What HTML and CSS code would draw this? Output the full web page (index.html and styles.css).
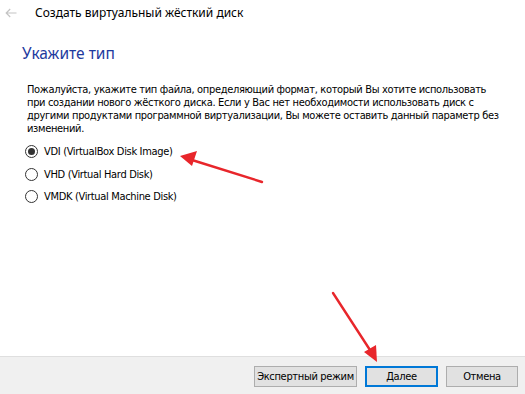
FILE: index.html
```html
<!DOCTYPE html>
<html lang="ru">
<head>
  <meta charset="UTF-8" />
  <title>Создать виртуальный жёсткий диск</title>
  <link rel="stylesheet" href="styles.css">
</head>
<body>
  <div class="wizard">
    <div class="titlebar">
      <svg class="back" width="12" height="10" viewBox="0 0 12 10">
        <path d="M11.5 5H1.2M5.2 1L1.2 5l4 4" fill="none" stroke="#c4c4c4" stroke-width="1.2"/>
      </svg>
      <span class="title">Создать виртуальный жёсткий диск</span>
    </div>

    <div class="content">
      <h2>Укажите тип</h2>
      <p class="descr">Пожалуйста, укажите тип файла, определяющий формат, который Вы хотите использовать при создании нового жёсткого диска. Если у Вас нет необходимости использовать диск с другими продуктами программной виртуализации, Вы можете оставить данный параметр без изменений.</p>

      <div class="options">
        <label class="option"><span class="radio checked"></span>VDI (VirtualBox Disk Image)</label>
        <label class="option"><span class="radio"></span>VHD (Virtual Hard Disk)</label>
        <label class="option"><span class="radio"></span>VMDK (Virtual Machine Disk)</label>
      </div>
    </div>

    <div class="footer">
      <button class="btn btn-expert">Экспертный режим</button>
      <button class="btn btn-default">Далее</button>
      <button class="btn btn-cancel">Отмена</button>
    </div>
  </div>

  <!-- red annotation arrows -->
  <svg class="marks" width="525" height="394" viewBox="0 0 525 394">
    <g stroke="#e8262b" stroke-width="2.4" stroke-linecap="round" fill="#e8262b">
      <line x1="262" y1="182" x2="192" y2="160"/>
      <polygon points="180,156 197,151 192,166" stroke="none"/>
      <line x1="333" y1="293" x2="370" y2="350"/>
      <polygon points="377,362 364,352 376,345" stroke="none"/>
    </g>
  </svg>
</body>
</html>
```

FILE: styles.css
```css
*, *::before, *::after {
  box-sizing: border-box;
}

body {
  margin: 0;
  background: #fff;
  font-family: "DejaVu Sans Condensed", "DejaVu Sans", sans-serif;
  font-size: 11px;
  letter-spacing: -0.33px;
  color: #000;
}

.wizard {
  height: 394px;
  display: flex;
  flex-direction: column;
}

.titlebar {
  display: flex;
  align-items: center;
  height: 27px;
  padding: 0 0 2px 5px;
  letter-spacing: 0;
}

.back {
  display: block;
  margin-right: 18px;
}

.title {
  font-family: "Noto Sans", sans-serif;
  font-size: 12px;
}

.content {
  flex: 1;
  padding: 15px 20px 0 22px;
}

h2 {
  margin: 0;
  font-family: "Noto Sans", sans-serif;
  font-size: 15.5px;
  font-weight: 400;
  letter-spacing: 0;
  color: #1e3a9e;
  line-height: 22px;
}

.descr {
  margin: 19px 0 0 5px;
  line-height: 13px;
  width: 480px;
}

.options {
  margin: 0 0 0 3px;
  padding-top: 10px;
  display: flex;
  flex-direction: column;
  gap: 9.5px;
}

.option {
  display: flex;
  align-items: center;
  height: 13px;
}

.radio {
  width: 13px;
  height: 13px;
  border: 1px solid #333;
  border-radius: 50%;
  margin-right: 6px;
  display: flex;
  align-items: center;
  justify-content: center;
  background: #fff;
}

.radio.checked::after {
  content: "";
  width: 7px;
  height: 7px;
  border-radius: 50%;
  background: #333;
}

.footer {
  height: 38px;
  background: #f0f0f0;
  border-top: 1px solid #dfdfdf;
  display: flex;
  justify-content: flex-end;
  align-items: flex-start;
  gap: 8px;
  padding: 9px 7px 0 0;
}

.btn {
  font: inherit;
  letter-spacing: -0.33px;
  white-space: nowrap;
  height: 21px;
  background: #e1e1e1;
  border: 1px solid #adadad;
  padding: 0;
  color: #000;
}

.btn-expert { width: 103px; }
.btn-default { width: 73px; border: 2px solid #0078d7; }
.btn-cancel { width: 72px; }

.marks {
  position: absolute;
  left: 0;
  top: 0;
  pointer-events: none;
}
```
